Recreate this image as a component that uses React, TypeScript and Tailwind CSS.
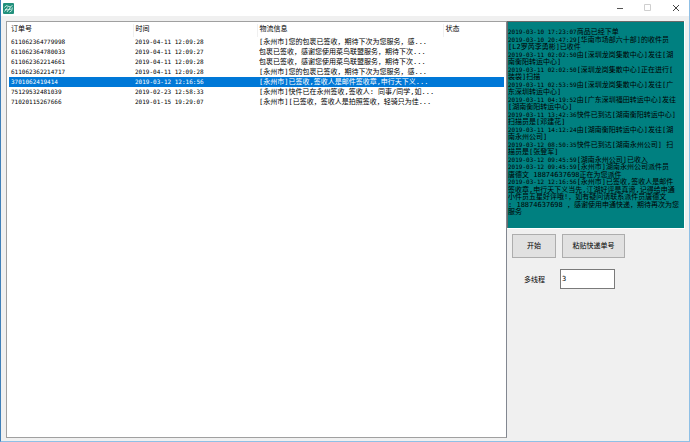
import { clsx } from 'clsx';

type Order = { id: string; time: string; info: string; selected?: boolean };
type LogLine = { time?: string; text: string };

const orders: Order[] = [
  { id: '611062364779998', time: '2019-04-11 12:09:28', info: '[永州市]您的包裹已签收，期待下次为您服务，感...' },
  { id: '611062364780033', time: '2019-04-11 12:09:27', info: '包裹已签收，感谢您使用菜鸟联盟服务，期待下次...' },
  { id: '611062362214661', time: '2019-04-11 12:09:28', info: '包裹已签收，感谢您使用菜鸟联盟服务，期待下次...' },
  { id: '611062362214717', time: '2019-04-11 12:09:28', info: '[永州市]您的包裹已签收，期待下次为您服务，感...' },
  { id: '3701062419414', time: '2019-03-12 12:16:56', info: '[永州市]已签收,签收人是邮件签收章,申行天下义...', selected: true },
  { id: '75129532481039', time: '2019-02-23 12:58:33', info: '[永州市]快件已在永州签收,签收人: 同事/同学,如...' },
  { id: '71020115267666', time: '2019-01-15 19:29:07', info: '[永州市][已签收，签收人是拍照签收，轻骑只为佳...' },
];

const logLines: LogLine[] = [
  { time: '2019-03-10 17:23:07', text: '商品已经下单' },
  { time: '2019-03-10 20:47:29', text: '[华南市场部六十部]的收件员' },
  { text: '[L2罗芮李勇彬]已收件' },
  { time: '2019-03-11 02:02:50', text: '由[深圳龙岗集散中心]发往[湖' },
  { text: '南衡阳转运中心]' },
  { time: '2019-03-11 02:02:50', text: '[深圳龙岗集散中心]正在进行[' },
  { text: '装袋]扫描' },
  { time: '2019-03-11 02:53:59', text: '由[深圳龙岗集散中心]发往[广' },
  { text: '东深圳转运中心]' },
  { time: '2019-03-11 04:19:52', text: '由[广东深圳福田转运中心]发往' },
  { text: '[湖南衡阳转运中心]' },
  { time: '2019-03-11 13:42:36', text: '快件已到达[湖南衡阳转运中心]' },
  { text: '扫描员是[邓建花]' },
  { time: '2019-03-11 14:12:24', text: '由[湖南衡阳转运中心]发往[湖' },
  { text: '南永州公司]' },
  { time: '2019-03-12 08:50:35', text: '快件已到达[湖南永州公司] 扫' },
  { text: '描员是[张登军]' },
  { time: '2019-03-12 09:45:59', text: '[湖南永州公司]已收入' },
  { time: '2019-03-12 09:45:59', text: '[永州市]湖南永州公司派件员' },
  { text: '唐德文 18874637698正在为您派件' },
  { time: '2019-03-12 12:16:56', text: '[永州市]已签收,签收人是邮件' },
  { text: '签收章,申行天下义当先,江湖好评是真谛,记得给申通' },
  { text: '小件员五星好评哦!，如有疑问请联系派件员唐德文' },
  { text: ': 18874637698 ，感谢使用申通快递，期待再次为您' },
  { text: '服务' },
];

function TitleBar() {
  return (
    <header className="flex h-4 items-center justify-between bg-white pl-0.5 pr-[6px]">
      <svg viewBox="0 0 11 11" className="size-[11px]" aria-hidden="true">
        <rect width="11" height="11" rx="1" fill="#22907c" />
        <path d="M1.5 4.5Q3 1.5 5 3.2T9.5 2.5M1.5 8.5L4.5 4.5M4 9L7.5 4M6.5 9.2Q9.5 8.5 9.3 4.5M2 6.5Q5 7.5 8 6" fill="none" stroke="#d9f3ec" strokeWidth="0.9" />
      </svg>
      <div className="flex gap-[14px]">
        <button type="button" aria-label="最小化" className="flex h-4 w-[14px] items-center justify-center">
          <svg viewBox="0 0 8 8" className="size-2"><path d="M1 4.5H7" stroke="#555" /></svg>
        </button>
        <button type="button" aria-label="最大化" className="flex h-4 w-[14px] items-center justify-center">
          <svg viewBox="0 0 8 8" className="size-2"><path d="M0.5 0.5H6.5V6.5H0.5Z" fill="none" stroke="#cfcfcf" /></svg>
        </button>
        <button type="button" aria-label="关闭" className="flex h-4 w-[14px] items-center justify-center">
          <svg viewBox="0 0 8 8" className="size-2"><path d="M1 1L7 7M7 1L1 7" stroke="#444" /></svg>
        </button>
      </div>
    </header>
  );
}

function OrderList() {
  return (
    <div className="min-w-0 flex-1 border border-[#a0a0a0] border-r-[#828790] bg-white px-[2px] pt-[2px]">
      <table className="w-full table-fixed border-collapse text-left whitespace-nowrap">
        <colgroup>
          <col className="w-[124px]" />
          <col className="w-[124px]" />
          <col className="w-[186px]" />
          <col />
        </colgroup>
        <thead>
          <tr className="h-[13px] align-top">
            {['订单号', '时间', '物流信息', '状态'].map((name) => (
              <th key={name} className="border-r border-[#f0f0f0] px-[2px] py-0 font-normal last:border-r-0">{name}</th>
            ))}
          </tr>
        </thead>
        <tbody>
          {orders.map((order) => (
            <tr key={order.id} className={clsx('h-[10px]', order.selected && 'bg-[#0078d7] text-white')}>
              <td className="px-[2px] py-0 text-[6px] leading-[10px]">{order.id}</td>
              <td className="px-[2px] py-0 text-[6px] leading-[10px]">{order.time}</td>
              <td className="px-[2px] py-0 leading-[10px]">{order.info}</td>
              <td />
            </tr>
          ))}
        </tbody>
      </table>
    </div>
  );
}

function TrackingLog() {
  return (
    <div className="border-r border-b border-white">
      <div role="log" className="h-[207px] overflow-hidden border-t border-l border-[#696969] bg-[#008080] pt-[7px]">
        <div className="flex h-[187px] flex-col justify-between leading-[7px] whitespace-pre">
          {logLines.map((line, i) => (
            <p key={i} className="h-[7px]">
              {line.time && <time className="text-[6px] leading-[5px]">{line.time}</time>}
              {line.text}
            </p>
          ))}
        </div>
      </div>
    </div>
  );
}

function Controls() {
  return (
    <div className="px-[5px] pt-[5px]">
      <div className="flex gap-[6px]">
        <button type="button" className="h-6 w-[44px] border border-[#adadad] bg-[#e1e1e1]">开始</button>
        <button type="button" className="h-6 w-[63px] border border-[#adadad] bg-[#e1e1e1]">粘贴快递单号</button>
      </div>
      <div className="mt-[11px] flex items-center gap-[15px] pl-3">
        <label htmlFor="threads" className="pt-[2px]">多线程</label>
        <input id="threads" type="text" defaultValue="3" className="h-5 w-[55px] border border-[#7a7a7a] bg-white px-px" />
      </div>
    </div>
  );
}

export default function App() {
  return (
    <div className="flex min-h-screen flex-col border-x border-b border-[#8fc0e6] border-l-[#3f7fb8] bg-[#f0f0f0] font-['DejaVu_Sans_Mono','Noto_Sans_CJK_SC',monospace] text-[7px] leading-[10px] text-black">
      <TitleBar />
      <main className="flex flex-1 pt-[5px] pr-1 pb-[3px] pl-[5px]">
        <OrderList />
        <aside className="w-[178px] shrink-0">
          <TrackingLog />
          <Controls />
        </aside>
      </main>
    </div>
  );
}
